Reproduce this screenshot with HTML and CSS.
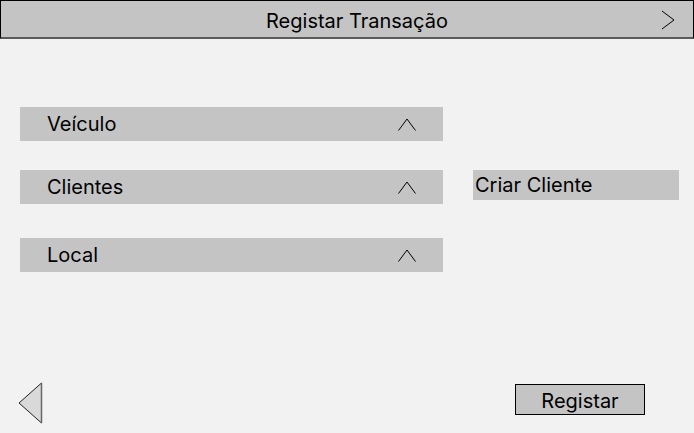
FILE: index.html
```html
<!DOCTYPE html>
<html lang="pt">
<head>
<meta charset="utf-8">
<title>Registar Transação</title>
<link rel="stylesheet" href="styles.css">
</head>
<body>
<div class="page">
  <header class="topbar">
    <h1 class="title">Registar Transação</h1>
    <svg class="next-icon" width="14" height="20" viewBox="0 0 14 20"><polyline points="1,1 13,10 1,19" fill="none" stroke="#000" stroke-width="1"/></svg>
  </header>
  <main class="content">
    <div class="selects">
      <div class="select"><span>Veículo</span><svg class="chev" width="18" height="13" viewBox="0 0 18 13"><polyline points="0.5,12.5 9,1 17.5,12.5" fill="none" stroke="#000" stroke-width="1"/></svg></div>
      <div class="select sel-clientes"><span>Clientes</span><svg class="chev" width="18" height="13" viewBox="0 0 18 13"><polyline points="0.5,12.5 9,1 17.5,12.5" fill="none" stroke="#000" stroke-width="1"/></svg></div>
      <div class="select sel-local"><span>Local</span><svg class="chev" width="18" height="13" viewBox="0 0 18 13"><polyline points="0.5,12.5 9,1 17.5,12.5" fill="none" stroke="#000" stroke-width="1"/></svg></div>
    </div>
    <div class="side">
      <div class="create">Criar Cliente</div>
    </div>
  </main>
  <footer class="bottombar">
    <svg class="back-icon" width="25" height="42" viewBox="0 0 25 42"><polygon points="23.5,1 1,21 23.5,41" fill="#d9d9d9" stroke="#222" stroke-width="1"/><line x1="23.5" y1="1" x2="23.5" y2="41" stroke="#666" stroke-width="1.5"/></svg>
    <button class="submit">Registar</button>
  </footer>
</div>
</body>
</html>
```
FILE: styles.css
```css
html, body {
  margin: 0;
  padding: 0;
  background: #f2f2f2;
}
.page {
  width: 694px;
  height: 433px;
  display: flex;
  flex-direction: column;
  font-family: Inter, "Noto Sans", sans-serif;
  color: #000;
  overflow: hidden;
}
.topbar {
  box-sizing: border-box;
  height: 39px;
  display: flex;
  align-items: center;
  background: #c4c4c4;
  border: 1px solid #000;
  border-bottom: 2px solid #5a5a5a;
  padding: 0 18px 0 52px;
}
.title {
  flex: 1;
  margin: 4px 0 0 0;
  text-align: center;
  font-weight: 400;
  font-size: 20px;
  line-height: 24px;
}
.next-icon {
  display: block;
  margin-top: 2px;
}
.content {
  display: flex;
  gap: 30px;
  padding: 68px 0 0 20px;
}
.selects {
  width: 423px;
  display: flex;
  flex-direction: column;
}
.select {
  height: 34px;
  background: #c4c4c4;
  display: flex;
  align-items: center;
  justify-content: space-between;
  padding: 0 27px 0 27px;
  font-size: 20px;
}
.select .chev {
  display: block;
  margin-top: 1px;
}
.sel-clientes { margin-top: 29px; }
.sel-local { margin-top: 34px; }
.side {
  padding-top: 63px;
}
.create {
  box-sizing: border-box;
  width: 206px;
  height: 30px;
  background: #c4c4c4;
  padding-left: 2px;
  font-size: 20px;
  line-height: 30px;
}
.bottombar {
  margin-top: auto;
  display: flex;
  align-items: flex-start;
  justify-content: space-between;
  padding: 0 49px 9px 18px;
}
.back-icon {
  display: block;
}
.submit {
  margin-top: 2px;
  box-sizing: border-box;
  width: 130px;
  height: 31px;
  background: #c4c4c4;
  border: 1px solid #000;
  font-family: Inter, "Noto Sans", sans-serif;
  font-size: 20px;
  color: #000;
  padding: 3px 0 0 0;
}
```
